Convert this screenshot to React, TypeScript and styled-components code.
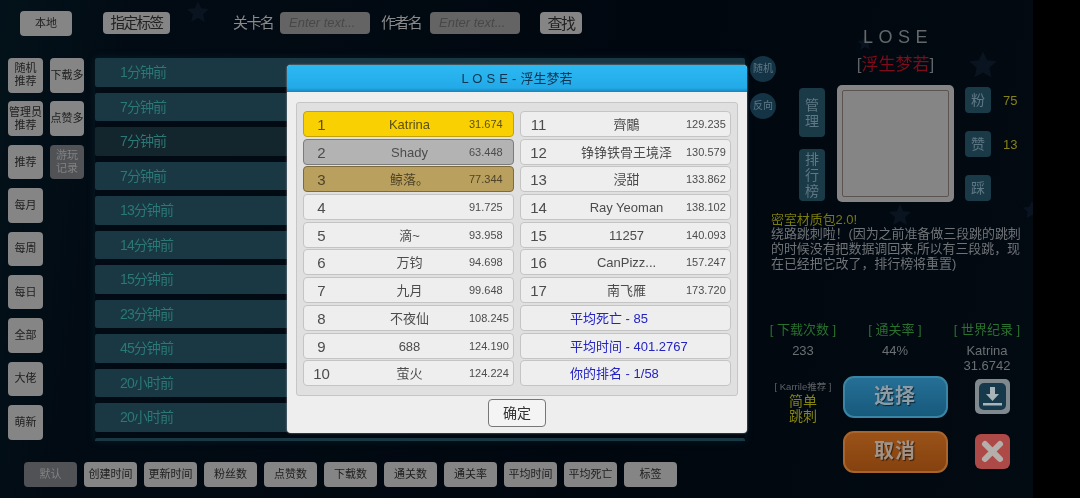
import React from 'react'
import styled, { createGlobalStyle } from 'styled-components'

const GlobalStyle = createGlobalStyle`
  html, body {
    margin: 0;
    width: 1080px;
    height: 498px;
    overflow: hidden;
    background: #000;
    font-family: "Liberation Sans", "Noto Sans CJK SC", sans-serif;
  }
  * { box-sizing: border-box; }
`

const Screen = styled.div`
  position: relative;
  display: flex;
  width: 1033px;
  height: 498px;
  overflow: hidden;
  background: linear-gradient(100deg, #03121a 0%, #020b14 12%, #01070f 60%, #020a12 100%);
  filter: blur(0.4px);
`

const Star = styled.svg<{ $x: number; $y: number; $s: number }>`
  position: absolute;
  left: ${p => p.$x}px;
  top: ${p => p.$y}px;
  width: ${p => p.$s}px;
  height: ${p => p.$s}px;
  fill: #0a1420;
`

const MainColumn = styled.div`
  position: relative;
  width: 745px;
  display: flex;
  flex-direction: column;
`

const TopBar = styled.div`
  height: 58px;
  padding: 11px 0 0 20px;
  display: flex;
  align-items: flex-start;
`

const GreyButton = styled.div<{ $w: number; $dim?: boolean; $tight?: boolean }>`
  width: ${p => p.$w}px;
  display: flex;
  align-items: center;
  justify-content: center;
  text-align: center;
  flex: none;
  background: ${p => (p.$dim ? '#505255' : '#858585')};
  color: ${p => (p.$dim ? '#828282' : '#202020')};
  border-radius: 4px;
  font-size: 11px;
  line-height: 13px;
  white-space: nowrap;
  letter-spacing: ${p => (p.$tight ? '-1.5px' : '0')};
`

const LocalButton = styled(GreyButton)`
  height: 25px;
  margin-right: 31px;
`

const TagButton = styled(GreyButton)`
  height: 22px;
  margin: 1px 63px 0 0;
  font-size: 14.5px;
`

const FieldLabel = styled.span<{ $w: number }>`
  width: ${p => p.$w}px;
  flex: none;
  font-size: 15px;
  line-height: 24px;
  letter-spacing: -1.6px;
  color: #8a8a8a;
`

const TextField = styled.div`
  width: 90px;
  height: 22px;
  margin: 1px 11px 0 0;
  padding-left: 9px;
  flex: none;
  border-radius: 4px;
  background: #646464;
  color: #484848;
  font-size: 13px;
  font-style: italic;
  line-height: 22px;
`

const SearchButton = styled(GreyButton)`
  height: 22px;
  margin: 1px 0 0 9px;
  font-size: 15px;
`

const Body = styled.div`
  height: 383px;
  display: flex;
  padding-left: 8px;
`

const NavColumn = styled.div<{ $w: number }>`
  width: ${p => p.$w}px;
  margin-right: ${p => (p.$w === 35 ? 7 : 11)}px;
  display: flex;
  flex-direction: column;
  gap: 8.9px;
  flex: none;
`

const NavButton = styled(GreyButton)`
  height: 34.5px;
`

const LevelList = styled.div`
  flex: 1;
  display: flex;
  flex-direction: column;
  gap: 6.05px;
  overflow: hidden;
  box-shadow: 0 0 8px rgba(30, 80, 95, 0.25);
`

const LevelRow = styled.div<{ $dark?: boolean }>`
  height: 28.5px;
  flex: none;
  padding-left: 25px;
  border-radius: 2px;
  background: ${p => (p.$dark ? '#13262d' : '#193844')};
  color: #2b7876;
  font-size: 14px;
  line-height: 28px;
  letter-spacing: -0.9px;
`

const BottomBar = styled.div`
  height: 57px;
  padding: 21px 0 0 24px;
  display: flex;
  gap: 7px;
`

const SortButton = styled(GreyButton)`
  height: 25px;
`

const Modal = styled.div`
  position: absolute;
  left: 287px;
  top: 65px;
  width: 460px;
  height: 368px;
  border-radius: 4px;
  overflow: hidden;
  background: #eeeeee;
  box-shadow: 0 0 2px #aaa;
`

const ModalHeader = styled.div`
  height: 27px;
  background: linear-gradient(180deg, #2cb9f2 0%, #22aae8 85%, #1683b8 100%);
  color: #10344f;
  font-size: 13px;
  line-height: 27px;
  text-align: center;
  word-spacing: 0.5px;
`

const ModalBody = styled.div`
  padding: 10px 9px 0;
  display: flex;
  flex-direction: column;
  align-items: center;
`

const ScorePanel = styled.div`
  width: 100%;
  height: 294px;
  padding: 8px 6px;
  display: grid;
  grid-auto-flow: column;
  grid-template-rows: repeat(10, 26px);
  grid-template-columns: 211px 211px;
  column-gap: 6px;
  row-gap: 1.7px;
  background: #e0e0e0;
  border: 1px solid #c6c6c6;
  border-radius: 3px;
`

const rowColors = {
  plain: ['#eeeeee', '#c4c4c4', '#4c4c4c'],
  gold: ['#f9d103', '#c2a20a', '#5a5014'],
  silver: ['#b3b3b3', '#7b7b7b', '#4c4c4c'],
  bronze: ['#b9a05f', '#7d6b3f', '#4e4328'],
} as const

const ScoreRow = styled.div<{ $tone: keyof typeof rowColors }>`
  display: grid;
  grid-template-columns: 36px 139px 36px;
  line-height: 25px;
  border-radius: 4px;
  background: ${p => rowColors[p.$tone][0]};
  border: 1px solid ${p => rowColors[p.$tone][1]};
  color: ${p => rowColors[p.$tone][2]};
`

const Rank = styled.span`
  font-size: 15px;
  text-align: center;
  margin-left: -1px;
`

const PlayerName = styled.span`
  font-size: 13px;
  text-align: center;
  white-space: nowrap;
  height: 24px;
`

const Time = styled.span`
  margin-left: -10px;
  font-size: 11px;
  white-space: nowrap;
`

const SummaryRow = styled.div`
  padding-left: 49px;
  border-radius: 4px;
  background: #eeeeee;
  border: 1px solid #c4c4c4;
  color: #2323c4;
  font-size: 13px;
  line-height: 25px;
`

const ConfirmButton = styled.div`
  width: 58px;
  height: 28px;
  margin-top: 3px;
  border: 1px solid #777;
  border-radius: 4px;
  background: #f4f4f4;
  color: #333;
  font-size: 14px;
  line-height: 26px;
  text-align: center;
`

const SidePanel = styled.div`
  position: relative;
  flex: 1;
  display: flex;
  flex-direction: column;
`

const PanelTop = styled.div`
  display: grid;
  grid-template-columns: 54px 1fr;
`

const RoundStack = styled.div`
  padding: 56px 0 0 5px;
  display: flex;
  flex-direction: column;
  gap: 11px;
`

const RoundButton = styled.div`
  width: 26px;
  height: 26px;
  border-radius: 50%;
  background: #143345;
  color: #5f7a88;
  font-size: 10px;
  line-height: 26px;
  text-align: center;
`

const LevelInfo = styled.div`
  width: 193px;
  display: flex;
  flex-direction: column;
  align-items: center;
  padding-top: 26px;
`

const LevelTitle = styled.div`
  height: 22px;
  font-size: 18px;
  line-height: 22px;
  letter-spacing: 5.5px;
  margin-right: -5px;
  color: #64686b;
`

const LevelAuthor = styled.div`
  height: 28px;
  margin-top: 5px;
  font-size: 17px;
  line-height: 24px;
  color: #5f6469;
  span {
    color: #800b1a;
  }
`

const PreviewRow = styled.div`
  align-self: flex-start;
  display: flex;
  gap: 12px;
  margin-top: 4px;
`

const SideButtons = styled.div`
  display: flex;
  flex-direction: column;
  justify-content: space-between;
  padding: 3px 0 1px;
`

const TealButton = styled.div<{ $h: number }>`
  width: 26px;
  height: ${p => p.$h}px;
  padding: 0 6px;
  display: flex;
  align-items: center;
  justify-content: center;
  border-radius: 4px;
  background: #1a3a48;
  color: #5f7886;
  font-size: 14px;
  line-height: 16px;
  text-align: center;
`

const Preview = styled.div`
  width: 117px;
  height: 117px;
  padding: 5px;
  border-radius: 5px;
  background: #858585;
  flex: none;
`

const PreviewInner = styled.div`
  height: 100%;
  border: 1px solid #5b5350;
  border-radius: 2px;
`

const VoteColumn = styled.div`
  display: flex;
  flex-direction: column;
  justify-content: space-between;
  padding: 2px 0 1px;
  margin-left: -1px;
`

const VoteRow = styled.div`
  display: flex;
  align-items: center;
  gap: 12px;
  height: 26px;
`

const VoteCount = styled.span`
  font-size: 13px;
  color: #85811c;
`

const Description = styled.div`
  margin: 10.5px 0 0 26px;
  font-size: 13px;
  line-height: 14.7px;
  letter-spacing: -0.08px;
  color: #707478;
  white-space: nowrap;
`

const DescriptionTitle = styled.div`
  color: #7a7a0f;
`

const StatGrid = styled.div`
  margin: 50.5px 0 0 12px;
  display: grid;
  grid-template-columns: repeat(3, 92px);
  text-align: center;
`

const Stat = styled.div`
  font-size: 13px;
  line-height: 15px;
  color: #6b7073;
  height: 54px;
`

const StatLabel = styled.div`
  color: #2a702e;
  margin-bottom: 6px;
`

const ActionGrid = styled.div`
  margin: 0 0 0 12px;
  display: grid;
  grid-template-columns: repeat(3, 92px);
  grid-auto-rows: 42px;
  row-gap: 13px;
  justify-items: center;
  align-items: center;
`

const Recommend = styled.div`
  align-self: start;
  padding-top: 5px;
  text-align: center;
  color: #858511;
  font-size: 14px;
  line-height: 15px;
`

const RecommendBy = styled.div`
  color: #5e6266;
  font-size: 9.5px;
  line-height: 11px;
  margin-bottom: 2px;
  white-space: nowrap;
`

const BigButton = styled.div<{ $tone: 'blue' | 'orange' }>`
  width: 105px;
  height: 42px;
  flex: none;
  border-radius: 11px;
  border: 2px solid ${p => (p.$tone === 'blue' ? '#3a85a6' : '#a8642a')};
  background: ${p =>
    p.$tone === 'blue'
      ? 'linear-gradient(180deg, #256f96 0%, #175a7c 100%)'
      : 'linear-gradient(180deg, #9a5218 0%, #85420f 100%)'};
  color: ${p => (p.$tone === 'blue' ? '#8c9ca6' : '#a09286')};
  font-size: 20px;
  font-weight: bold;
  line-height: 37px;
  letter-spacing: 1px;
  text-align: center;
  text-shadow: 1px 1px 1px rgba(0, 0, 0, 0.6);
  justify-self: center;
`

const IconSvg = styled.svg`
  width: 37px;
  height: 37px;
  margin-left: 10px;
  display: block;
`

const stars = [
  { x: 186, y: 0, s: 24 },
  { x: 968, y: 50, s: 30 },
  { x: 857, y: 35, s: 16 },
  { x: 888, y: 203, s: 24 },
  { x: 1022, y: 200, s: 20 },
]

const navFirst = [
  ['随机', '推荐'],
  ['管理员', '推荐'],
  ['推荐'],
  ['每月'],
  ['每周'],
  ['每日'],
  ['全部'],
  ['大佬'],
  ['萌新'],
]

const levels = [
  '1分钟前', '7分钟前', '7分钟前', '7分钟前', '13分钟前', '14分钟前',
  '15分钟前', '23分钟前', '45分钟前', '20小时前', '20小时前', '',
]

const sorts = ['默认', '创建时间', '更新时间', '粉丝数', '点赞数', '下载数', '通关数', '通关率', '平均时间', '平均死亡', '标签']

const scores: [string, string][] = [
  ['Katrina', '31.674'], ['Shady', '63.448'], ['鲸落。', '77.344'], ['', '91.725'],
  ['滴~', '93.958'], ['万钧', '94.698'], ['九月', '99.648'], ['不夜仙', '108.245'],
  ['688', '124.190'], ['萤火', '124.224'], ['齊鷳', '129.235'], ['铮铮铁骨王境泽', '130.579'],
  ['浸甜', '133.862'], ['Ray Yeoman', '138.102'], ['11257', '140.093'],
  ['CanPizz...', '157.247'], ['南飞雁', '173.720'],
]

const toneFor = (i: number) => (i === 0 ? 'gold' : i === 1 ? 'silver' : i === 2 ? 'bronze' : 'plain')

export default function App() {
  return (
    <>
      <GlobalStyle />
      <Screen>
        {stars.map(st => (
          <Star key={st.x} $x={st.x} $y={st.y} $s={st.s} viewBox="0 0 24 24">
            <path d="M12 1l3.2 7.2 7.8.8-5.9 5.2 1.7 7.7L12 18l-6.8 4 1.7-7.7L1 9l7.8-.8z" />
          </Star>
        ))}

        <MainColumn>
          <TopBar>
            <LocalButton $w={52}>本地</LocalButton>
            <TagButton $w={67} $tight>指定标签</TagButton>
            <FieldLabel $w={47}>关卡名</FieldLabel>
            <TextField>Enter text...</TextField>
            <FieldLabel $w={49}>作者名</FieldLabel>
            <TextField>Enter text...</TextField>
            <SearchButton $w={42} $tight>查找</SearchButton>
          </TopBar>

          <Body>
            <NavColumn $w={35}>
              {navFirst.map(lines => (
                <NavButton key={lines.join('')} $w={35}>
                  <div>{lines.map(l => <div key={l}>{l}</div>)}</div>
                </NavButton>
              ))}
            </NavColumn>
            <NavColumn $w={34}>
              <NavButton $w={34}>下载多</NavButton>
              <NavButton $w={34}>点赞多</NavButton>
              <NavButton $w={34} $dim><div>游玩<br />记录</div></NavButton>
            </NavColumn>
            <LevelList>
              {levels.map((t, i) => (
                <LevelRow key={i} $dark={i === 2}>{t}</LevelRow>
              ))}
            </LevelList>
          </Body>

          <BottomBar>
            {sorts.map((s, i) => (
              <SortButton key={s} $w={53} $dim={i === 0}>{s}</SortButton>
            ))}
          </BottomBar>
        </MainColumn>

        <SidePanel>
          <PanelTop>
            <RoundStack>
              <RoundButton>随机</RoundButton>
              <RoundButton>反向</RoundButton>
            </RoundStack>
            <LevelInfo>
              <LevelTitle>LOSE</LevelTitle>
              <LevelAuthor>[<span>浮生梦若</span>]</LevelAuthor>
              <PreviewRow>
                <SideButtons>
                  <TealButton $h={49}>管理</TealButton>
                  <TealButton $h={52}>排行榜</TealButton>
                </SideButtons>
                <Preview><PreviewInner /></Preview>
                <VoteColumn>
                  <VoteRow><TealButton $h={26}>粉</TealButton><VoteCount>75</VoteCount></VoteRow>
                  <VoteRow><TealButton $h={26}>赞</TealButton><VoteCount>13</VoteCount></VoteRow>
                  <VoteRow><TealButton $h={26}>踩</TealButton></VoteRow>
                </VoteColumn>
              </PreviewRow>
            </LevelInfo>
          </PanelTop>

          <Description>
            <DescriptionTitle>密室材质包2.0!</DescriptionTitle>
            <div>绕路跳刺啦！(因为之前准备做三段跳的跳刺</div>
            <div>的时候没有把数据调回来,所以有三段跳，现</div>
            <div>在已经把它改了，排行榜将重置)</div>
          </Description>

          <StatGrid>
            <Stat><StatLabel>[ 下载次数 ]</StatLabel>233</Stat>
            <Stat><StatLabel>[ 通关率 ]</StatLabel>44%</Stat>
            <Stat><StatLabel>[ 世界纪录 ]</StatLabel>Katrina<br />31.6742</Stat>
          </StatGrid>

          <ActionGrid>
            <Recommend>
              <RecommendBy>[ Karrile推荐 ]</RecommendBy>
              简单<br />跳刺
            </Recommend>
            <BigButton $tone="blue">选择</BigButton>
            <IconSvg viewBox="0 0 37 37">
              <rect x="1" y="1" width="35" height="35" rx="5" fill="#7f898e" />
              <rect x="5" y="5" width="27" height="27" rx="5" fill="#163a4c" />
              <path d="M16 9h5v7h4l-6.5 7-6.5-7h4z" fill="#a9b4b8" />
              <rect x="9" y="25" width="19" height="2.5" fill="#a9b4b8" />
            </IconSvg>
            <div />
            <BigButton $tone="orange">取消</BigButton>
            <IconSvg viewBox="0 0 37 37">
              <rect x="1" y="1" width="35" height="35" rx="6" fill="#ad4947" />
              <path d="M11 11l15 15M26 11L11 26" stroke="#b5afac" strokeWidth="6" strokeLinecap="round" />
            </IconSvg>
          </ActionGrid>
        </SidePanel>

        <Modal>
          <ModalHeader>L O S E - 浮生梦若</ModalHeader>
          <ModalBody>
            <ScorePanel>
              {scores.map(([name, time], i) => (
                <ScoreRow key={i} $tone={toneFor(i)}>
                  <Rank>{i + 1}</Rank>
                  <PlayerName>{name}</PlayerName>
                  <Time>{time}</Time>
                </ScoreRow>
              ))}
              <SummaryRow>平均死亡 - 85</SummaryRow>
              <SummaryRow>平均时间 - 401.2767</SummaryRow>
              <SummaryRow>你的排名 - 1/58</SummaryRow>
            </ScorePanel>
            <ConfirmButton>确定</ConfirmButton>
          </ModalBody>
        </Modal>
      </Screen>
    </>
  )
}
